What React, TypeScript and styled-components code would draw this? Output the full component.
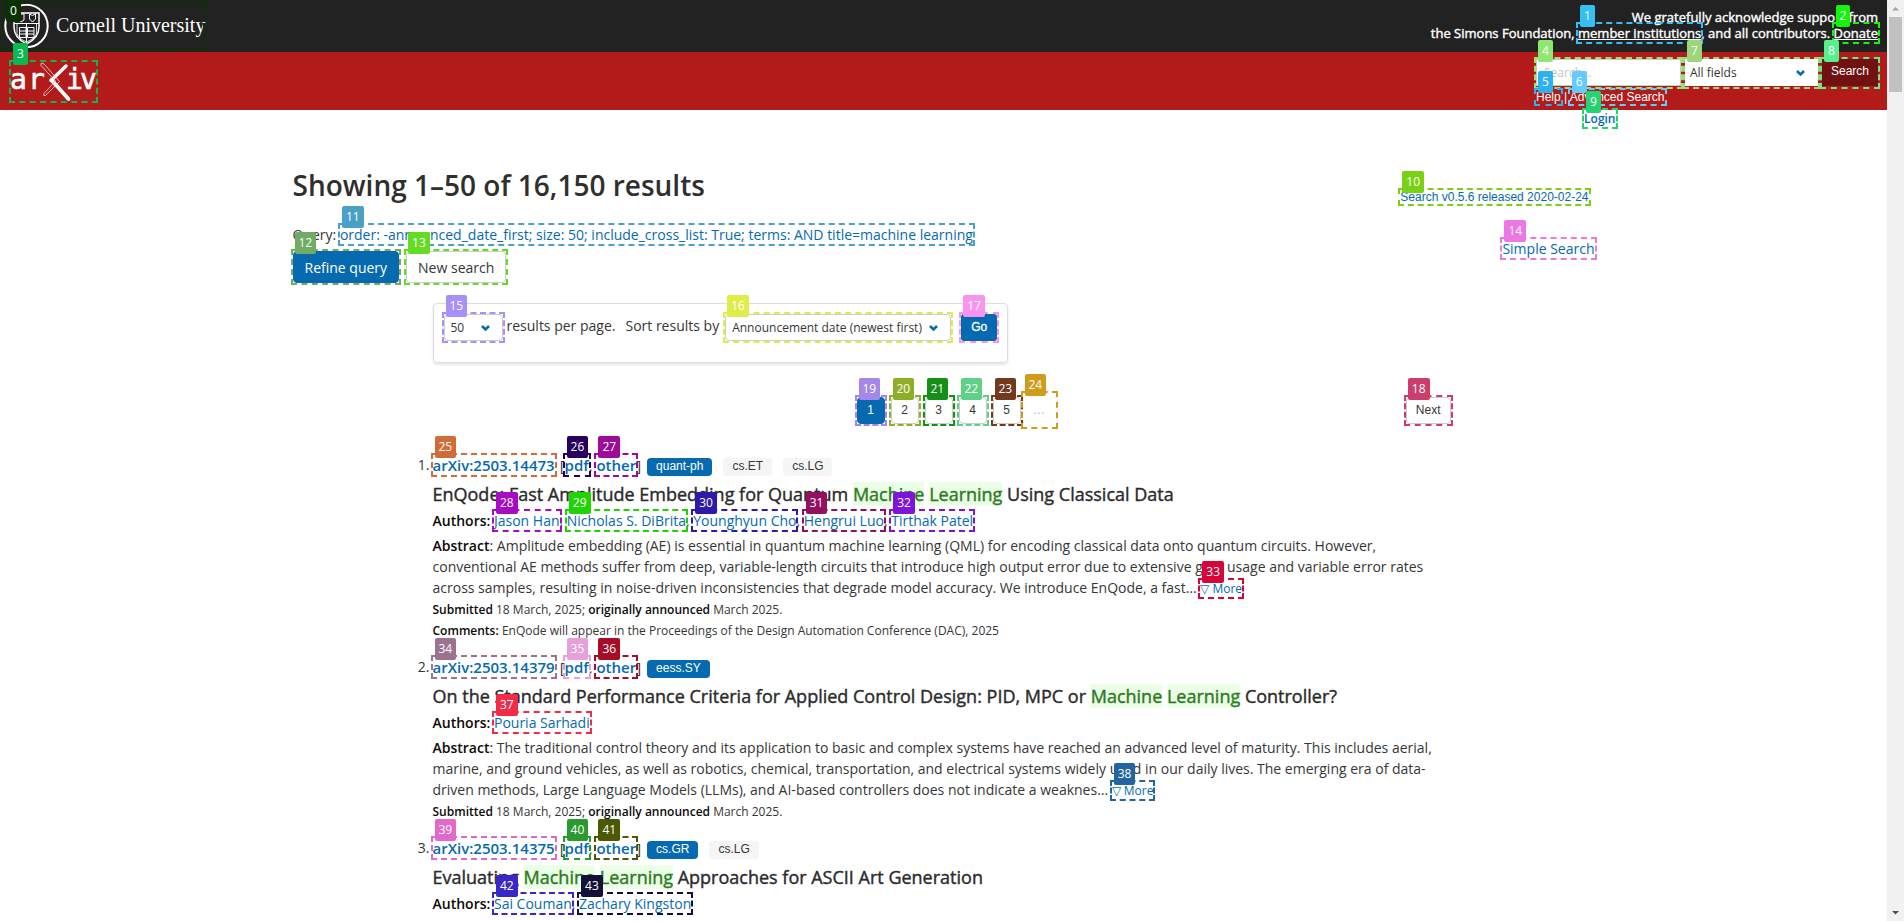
import React, { Fragment, ReactNode } from "react";
import styled, { createGlobalStyle, css } from "styled-components";

const sans = `"Open Sans", "Noto Sans", sans-serif`;
const arial = `"Liberation Sans", Arial, sans-serif`;
const blue = "#056aaf";

const GlobalStyle = createGlobalStyle`
  *, *::before, *::after { box-sizing: border-box; }
  body { margin: 0; background: #fff; color: #363636; font: 14px/21px ${sans}; }
  h1, h2, p, ol, ul { margin: 0; padding: 0; font-weight: inherit; }
  ol, ul { list-style: none; }
  a { color: ${blue}; text-decoration: none; }
  button, input, select { font-family: inherit; margin: 0; }
`;

const Shell = styled.div`
  display: flex;
  height: 100vh;
  overflow: hidden;
`;

const Page = styled.div`
  flex: 1;
  min-width: 0;
  overflow: hidden;
`;

const ScrollTrack = styled.div`
  flex: 0 0 17px;
  display: flex;
  flex-direction: column;
  align-items: center;
  background: #f1f1f1;
`;

const ScrollArrow = styled.svg`
  display: block;
  flex: none;
  width: 17px;
  height: 17px;
`;

const ScrollThumb = styled.div`
  width: 13px;
  height: 75px;
  margin-bottom: auto;
  background: #c1c1c1;
`;

/* Numbered marker: dashed frame with a tab above it */
const Frame = styled.span<{ $color: string; $block?: boolean }>`
  position: relative;
  outline: 2px dashed ${(p) => p.$color};
  ${(p) =>
    p.$block &&
    css`
      display: inline-flex;
      flex: none;
      vertical-align: top;
    `}
`;

const Tab = styled.span<{ $color: string; $low?: boolean }>`
  position: absolute;
  z-index: 2;
  left: 2px;
  top: ${(p) => (p.$low ? "-4px" : "-19px")};
  height: 22px;
  padding: 0 4px;
  border-radius: 2px;
  background: ${(p) => p.$color};
  color: #fff;
  font: 400 12px/21px ${sans};
  -webkit-text-stroke: 0;
  white-space: nowrap;
`;

type MarkProps = { n: number; color: string; block?: boolean; low?: boolean; children: ReactNode };
const Mark = ({ n, color, block, low, children }: MarkProps) => (
  <Frame $color={color} $block={block}>
    {children}
    <Tab $color={color} $low={low}>{n}</Tab>
  </Frame>
);

const TopBar = styled.header`
  display: flex;
  justify-content: space-between;
  height: 52px;
  padding: 4px 9px 4px 4px;
  background: #222;
`;

const Cornell = styled.a`
  display: flex;
  align-items: center;
  gap: 6px;
  width: 199px;
  height: 43px;
  color: #fff;
  font: 20px/43px "Liberation Serif", serif;
  white-space: nowrap;
  svg { flex: none; }
`;

const Thanks = styled.p`
  padding-top: 5px;
  color: #fff;
  font-size: 13px;
  -webkit-text-stroke: 0.4px;
  line-height: 16px;
  text-align: right;
  a { color: #fff; text-decoration: underline; }
`;

const RedBar = styled.div`
  display: flex;
  justify-content: space-between;
  align-items: flex-start;
  height: 58px;
  padding: 7px 9px 0 11px;
  background: #b31b1b;
`;

const LogoSlot = styled.div`
  padding-top: 3px;
`;

const LogoLink = styled.a`
  display: block;
  svg { display: block; overflow: visible; }
`;

const SearchForm = styled.form`
  font: 12px/20px ${arial};
  color: #fff;
  a { color: #fff; }
`;

const SearchRow = styled.div`
  display: flex;
  gap: 4px;
  height: 28px;
`;

const SearchInput = styled.input`
  width: 145px;
  height: 27px;
  padding: 0 7px;
  border: 1px solid #ccc;
  background: #fff;
  font: 12px/20px ${sans};
  &::placeholder { color: #c4c4c4; opacity: 1; }
`;

const SearchButton = styled.button`
  width: 56px;
  height: 27px;
  padding: 0 0 3px;
  border: 0;
  background: #711111;
  color: #fff;
  font: 12px/20px ${arial};
`;

const SelectBox = styled.span`
  position: relative;
  display: inline-block;
  svg { position: absolute; right: 12px; top: 10px; pointer-events: none; }
`;

const Select = styled.select<{ $width: number; $square?: boolean }>`
  display: block;
  appearance: none;
  width: ${(p) => p.$width}px;
  height: 27px;
  padding: 0 ${(p) => (p.$square ? 4 : 6)}px;
  border: 1px solid ${(p) => (p.$square ? "#fff" : "#ccc")};
  border-radius: ${(p) => (p.$square ? 0 : 4)}px;
  background: #fff;
  color: #363636;
  font: 12px/20px ${sans};
`;

const LoginRow = styled.div`
  max-width: 1344px;
  margin: 0 auto;
  text-align: right;
  font-size: 12px;
  font-weight: 600;
  line-height: 18px;
`;

const Main = styled.main`
  max-width: 1344px;
  margin: 0 auto;
  padding: 40px 21px 0;
`;

const Intro = styled.section`
  display: grid;
  grid-template-columns: 1fr auto;
`;

const Heading = styled.h1`
  color: #2f2f2f;
  font-size: 28px;
  font-weight: 600;
  line-height: 34px;
`;

const Query = styled.p`
  margin: 22px 0 5px;
  line-height: 22px;
`;

const Buttons = styled.div`
  display: flex;
  gap: 7px;
`;

const Button = styled.button<{ $primary?: boolean }>`
  height: 32px;
  padding: 0 11px;
  border: 1px solid ${(p) => (p.$primary ? blue : "#ccc")};
  border-radius: 4px;
  background: ${(p) => (p.$primary ? blue : "#fff")};
  color: ${(p) => (p.$primary ? "#fff" : "#363636")};
  font-size: 14px;
`;

const Aside = styled.aside`
  display: flex;
  flex-direction: column;
  align-items: flex-end;
  gap: 32px;
  padding-top: 20px;
`;

const Version = styled.p`
  margin-right: 6px;
  font: 12px/18px ${arial};
`;

const Column = styled.div`
  margin: 20px 144px 0 140px;
`;

const Panel = styled.form`
  display: flex;
  align-items: flex-start;
  width: fit-content;
  height: 60px;
  padding: 10px;
  border: 1px solid #ddd;
  border-radius: 4px;
  box-shadow: 0 2px 3px rgba(10, 10, 10, 0.1);
  label { padding: 1px 6px 0 4px; }
`;

const GoButton = styled.button`
  width: 36px;
  height: 27px;
  padding: 0 0 2px;
  border: 0;
  border-radius: 3px;
  background: ${blue};
  color: #fff;
  font: 12px/20px ${arial};
  -webkit-text-stroke: 0.3px;
`;

const GoSlot = styled.span`
  margin-left: 10px;
`;

const Pager = styled.nav`
  display: grid;
  grid-template-columns: 1fr auto 1fr;
  align-items: center;
  margin: 30px 0 26px;
  font: 12px/20px ${arial};
`;

const PageList = styled.ul`
  grid-column: 2;
  display: flex;
  align-items: center;
  gap: 6px;
  padding-left: 29px;
  li { display: flex; }
  li:last-child { margin-left: -4px; }
`;

const PageLink = styled.a<{ $current?: boolean }>`
  min-width: 28px;
  height: 27px;
  padding: 2px 9px;
  border: 1px solid ${(p) => (p.$current ? blue : "#ccc")};
  border-radius: 4px;
  background: ${(p) => (p.$current ? blue : "#fff")};
  color: ${(p) => (p.$current ? "#fff" : "#363636")};
  text-align: center;
`;

const Ellipsis = styled.span`
  width: 33px;
  height: 34px;
  color: #b5b5b5;
  line-height: 34px;
  text-align: center;
`;

const NextSlot = styled.div`
  justify-self: end;
`;

const Result = styled.li`
  position: relative;
  margin-bottom: 14px;
`;

const Ordinal = styled.span`
  position: absolute;
  right: 100%;
  padding-right: 3px;
  line-height: 24px;
`;

const IdLine = styled.p`
  display: flex;
  align-items: center;
  height: 24px;
  font-size: 15px;
  line-height: 24px;
`;

const Formats = styled.span`
  padding: 0 6px 0 5px;
  font-weight: 400;
`;

const Strong = styled.span`
  font-weight: 600;
`;

const Label = styled.span`
  color: #0a0a0a;
  font-weight: 600;
`;

const TagRow = styled.span`
  display: flex;
  gap: 11px;
`;

const Tag = styled.span<{ $primary?: boolean }>`
  height: 18px;
  margin-top: 3px;
  padding: 0 9px;
  border-radius: 4px;
  background: ${(p) => (p.$primary ? blue : "#f5f5f5")};
  color: ${(p) => (p.$primary ? "#fff" : "#363636")};
  font: 12px/16px ${arial};
`;

const Title = styled.p`
  margin-top: 3px;
  color: #2b2b2b;
  font-size: 18px;
  -webkit-text-stroke: 0.4px;
  line-height: 28px;
`;

const Hit = styled.span`
  background: #ebffe6;
  color: #2b7a1f;
`;

const Authors = styled.p`
  margin-top: 1px;
  line-height: 24px;
`;

const Abstract = styled.p`
  margin: 2px 0 1px;
`;

const More = styled.span`
  font-size: 12px;
`;

const Small = styled.p`
  font-size: 12px;
  line-height: 20px;
  & + & { line-height: 21px; }
`;

const Chevron = () => (
  <svg width="11" height="8" viewBox="0 0 11 8" aria-hidden="true">
    <path d="M2 2 L5.5 5.5 L9 2" fill="none" stroke={blue} strokeWidth="2.6" />
  </svg>
);

const Seal = () => (
  <svg width="46" height="46" viewBox="0 0 46 46" fill="none" stroke="#fff" aria-hidden="true">
    <circle cx="22.5" cy="23" r="21.2" strokeWidth="2" />
    <path d="M10 10 H35 V24 Q35 35 22.5 41 Q10 35 10 24 Z" strokeWidth="1.5" />
    <path d="M10 20.5 H35 M22.5 20.5 V40 M14 11 H20 V17 L17 19 L14 17 Z" />
    <path d="M25.5 11 Q28.5 14 31.5 11 V16 L28.5 19 L25.5 16 Z" />
    <path d="M15.5 24.5 H22 V34.5 H15.5 Z M23.5 24.5 H30 V34.5 H23.5 Z M16 28 H22 M16 31 H22 M24 28 H30 M24 31 H30" />
    <path d="M13 21 V31 Q16 37 22.5 39 Q29 37 32.5 31 V21" strokeWidth="0.8" />
  </svg>
);

const ArxivLogo = () => (
  <svg width="85" height="39" viewBox="0 0 85 39" role="img" aria-label="arXiv">
    <g fill="#fff" stroke="#fff" strokeWidth="0.6" fontFamily="DejaVu Sans Mono, monospace" fontSize="28">
      <text x="-1" y="27">a</text>
      <text x="17" y="27">r</text>
      <text x="55" y="27">i</text>
      <text x="69" y="27">v</text>
    </g>
    <path d="M55 4 L40 18.5" fill="none" stroke="#fff" strokeWidth="3.4" strokeLinecap="round" />
    <path d="M40.5 18 L57.5 37" fill="none" stroke="#fff" strokeWidth="3.8" strokeLinecap="round" />
    <path d="M30 1.5 Q31 0.5 33 2 L48.5 19.5 L34.5 33.5 Q32 34.5 33 31.5 L44.5 19 L30 3.5 Z" fill="none" stroke="#f3caca" strokeWidth="0.9" />
  </svg>
);

type Link = [n: number, color: string, text: string];
type Paper = {
  id: Link;
  pdf: Link;
  other: Link;
  tags: string[];
  title: ReactNode;
  authors: Link[];
  abstract?: string;
  more?: Link;
  comments?: string;
};

const hit = (
  <>
    <Hit>Machine</Hit> <Hit>Learning</Hit>
  </>
);

const papers: Paper[] = [
  {
    id: [25, "#d06c38", "arXiv:2503.14473"],
    pdf: [26, "#2a005f", "pdf"],
    other: [27, "#9c0b9a", "other"],
    tags: ["quant-ph", "cs.ET", "cs.LG"],
    title: <>EnQode: Fast Amplitude Embedding for Quantum {hit} Using Classical Data</>,
    authors: [
      [28, "#a60cc4", "Jason Han"],
      [29, "#1fd400", "Nicholas S. DiBrita"],
      [30, "#2d1aab", "Younghyun Cho"],
      [31, "#931060", "Hengrui Luo"],
      [32, "#7d14d8", "Tirthak Patel"],
    ],
    abstract:
      "Amplitude embedding (AE) is essential in quantum machine learning (QML) for encoding classical data onto quantum circuits. However, conventional AE methods suffer from deep, variable-length circuits that introduce high output error due to extensive gate usage and variable error rates across samples, resulting in noise-driven inconsistencies that degrade model accuracy. We introduce EnQode, a fast…",
    more: [33, "#d60439", "▽ More"],
    comments: "EnQode will appear in the Proceedings of the Design Automation Conference (DAC), 2025",
  },
  {
    id: [34, "#9b738f", "arXiv:2503.14379"],
    pdf: [35, "#e8a0d8", "pdf"],
    other: [36, "#a80d26", "other"],
    tags: ["eess.SY"],
    title: <>On the Standard Performance Criteria for Applied Control Design: PID, MPC or {hit} Controller?</>,
    authors: [[37, "#f22c48", "Pouria Sarhadi"]],
    abstract:
      "The traditional control theory and its application to basic and complex systems have reached an advanced level of maturity. This includes aerial, marine, and ground vehicles, as well as robotics, chemical, transportation, and electrical systems widely used in our daily lives. The emerging era of data-driven methods, Large Language Models (LLMs), and AI-based controllers does not indicate a weaknes…",
    more: [38, "#2365a0", "▽ More"],
  },
  {
    id: [39, "#e268c9", "arXiv:2503.14375"],
    pdf: [40, "#2a9a2e", "pdf"],
    other: [41, "#4b5a00", "other"],
    tags: ["cs.GR", "cs.LG"],
    title: <>Evaluating {hit} Approaches for ASCII Art Generation</>,
    authors: [
      [42, "#3a27c6", "Sai Couman"],
      [43, "#141038", "Zachary Kingston"],
    ],
  },
];

const MarkedLink = ({ link: [n, color, text] }: { link: Link }) => (
  <Mark n={n} color={color}>
    <a href="#">{text}</a>
  </Mark>
);

const pageMarks: [number, string][] = [
  [19, "#a487e8"],
  [20, "#8fae28"],
  [21, "#149018"],
  [22, "#5fd088"],
  [23, "#74391a"],
];

export default function App() {
  return (
    <Shell>
      <GlobalStyle />
      <Page>
        <TopBar>
          <Mark n={0} color="#093200" block low>
            <Cornell href="#">
              <Seal />
              Cornell University
            </Cornell>
          </Mark>
          <Thanks>
            We gratefully acknowledge support from
            <br />
            the Simons Foundation, <MarkedLink link={[1, "#34c0f5", "member institutions"]} />, and all contributors.{" "}
            <MarkedLink link={[2, "#14f50c", "Donate"]} />
          </Thanks>
        </TopBar>
        <RedBar>
          <LogoSlot>
            <Mark n={3} color="#06b950" block>
              <LogoLink href="#">
                <ArxivLogo />
              </LogoLink>
            </Mark>
          </LogoSlot>
          <SearchForm>
            <SearchRow>
              <Mark n={4} color="#8ee870" block>
                <SearchInput aria-label="Search term" placeholder="Search..." />
              </Mark>
              <Mark n={7} color="#9cd67c" block>
                <SelectBox>
                  <Select $width={133} $square aria-label="Field to search">
                    <option>All fields</option>
                  </Select>
                  <Chevron />
                </SelectBox>
              </Mark>
              <Mark n={8} color="#58f08c" block>
                <SearchButton type="button">Search</SearchButton>
              </Mark>
            </SearchRow>
            <MarkedLink link={[5, "#2cb2f0", "Help"]} /> | <MarkedLink link={[6, "#62ccff", "Advanced Search"]} />
          </SearchForm>
        </RedBar>
        <LoginRow>
          <MarkedLink link={[9, "#24d470", "Login"]} />
        </LoginRow>
        <Main>
          <Intro>
            <div>
              <Heading>Showing 1–50 of 16,150 results</Heading>
              <Query>
                Query:{" "}
                <MarkedLink
                  link={[
                    11,
                    "#4ba0c8",
                    "order: -announced_date_first; size: 50; include_cross_list: True; terms: AND title=machine learning",
                  ]}
                />
              </Query>
              <Buttons>
                <Mark n={12} color="#70ac66" block>
                  <Button type="button" $primary>Refine query</Button>
                </Mark>
                <Mark n={13} color="#64dc24" block>
                  <Button type="button">New search</Button>
                </Mark>
              </Buttons>
            </div>
            <Aside>
              <Version>
                <MarkedLink link={[10, "#7ad014", "Search v0.5.6 released 2020-02-24"]} />
              </Version>
              <p>
                <MarkedLink link={[14, "#ec78e4", "Simple Search"]} />
              </p>
            </Aside>
          </Intro>
          <Column>
            <Panel>
              <Mark n={15} color="#a890f8" block>
                <SelectBox>
                  <Select $width={59} id="size">
                    <option>50</option>
                  </Select>
                  <Chevron />
                </SelectBox>
              </Mark>
              <label htmlFor="size">results per page.</label>
              <label htmlFor="order">Sort results by</label>
              <Mark n={16} color="#e0ec48" block>
                <SelectBox>
                  <Select $width={226} id="order">
                    <option>Announcement date (newest first)</option>
                  </Select>
                  <Chevron />
                </SelectBox>
              </Mark>
              <GoSlot>
                <Mark n={17} color="#f894f0" block>
                  <GoButton type="button">Go</GoButton>
                </Mark>
              </GoSlot>
            </Panel>
            <Pager aria-label="Pagination">
              <PageList>
                {pageMarks.map(([n, color], i) => (
                  <li key={n}>
                    <Mark n={n} color={color} block>
                      <PageLink href="#" $current={i === 0}>{i + 1}</PageLink>
                    </Mark>
                  </li>
                ))}
                <li>
                  <Mark n={24} color="#d09c1c" block>
                    <Ellipsis>…</Ellipsis>
                  </Mark>
                </li>
              </PageList>
              <NextSlot>
                <Mark n={18} color="#cc3c6c" block>
                  <PageLink href="#">Next</PageLink>
                </Mark>
              </NextSlot>
            </Pager>
            <ol>
              {papers.map((p, i) => (
                <Result key={p.id[2]}>
                  <Ordinal>{i + 1}.</Ordinal>
                  <IdLine>
                    <Strong>
                      <MarkedLink link={p.id} />
                    </Strong>
                    <Formats>
                      [<Strong><MarkedLink link={p.pdf} /></Strong>, <Strong><MarkedLink link={p.other} /></Strong>]
                    </Formats>
                    <TagRow>
                      {p.tags.map((t, k) => (
                        <Tag key={t} $primary={k === 0}>{t}</Tag>
                      ))}
                    </TagRow>
                  </IdLine>
                  <Title>{p.title}</Title>
                  <Authors>
                    <Label>Authors:</Label>{" "}
                    {p.authors.map((a, k) => (
                      <Fragment key={a[0]}>
                        {k > 0 && ", "}
                        <MarkedLink link={a} />
                      </Fragment>
                    ))}
                  </Authors>
                  {p.abstract && p.more && (
                    <>
                      <Abstract>
                        <Label>Abstract</Label>: {p.abstract}{" "}
                        <More><MarkedLink link={p.more} /></More>
                      </Abstract>
                      <Small>
                        <Label>Submitted</Label> 18 March, 2025; <Label>originally announced</Label> March 2025.
                      </Small>
                    </>
                  )}
                  {p.comments && (
                    <Small>
                      <Label>Comments:</Label> {p.comments}
                    </Small>
                  )}
                </Result>
              ))}
            </ol>
          </Column>
        </Main>
      </Page>
      <ScrollTrack aria-hidden="true">
        <ScrollArrow viewBox="0 0 17 17">
          <path d="M5 10.5 L8.5 7 L12 10.5 Z" fill="#a3a3a3" />
        </ScrollArrow>
        <ScrollThumb />
        <ScrollArrow viewBox="0 0 17 17">
          <path d="M5 7 L8.5 10.5 L12 7 Z" fill="#505050" />
        </ScrollArrow>
      </ScrollTrack>
    </Shell>
  );
}
